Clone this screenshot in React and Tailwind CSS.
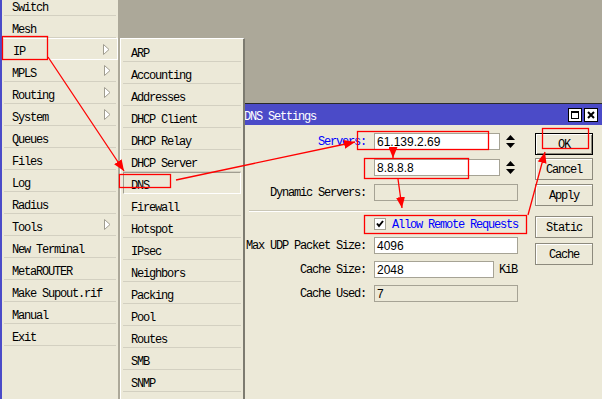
import React from "react";

const mainItems = [
  { label: "Switch" },
  { label: "Mesh" },
  { label: "IP", sub: true, active: true },
  { label: "MPLS", sub: true },
  { label: "Routing", sub: true },
  { label: "System", sub: true },
  { label: "Queues" },
  { label: "Files" },
  { label: "Log" },
  { label: "Radius" },
  { label: "Tools", sub: true },
  { label: "New Terminal" },
  { label: "MetaROUTER" },
  { label: "Make Supout.rif" },
  { label: "Manual" },
  { label: "Exit" },
];

const ipItems = [
  "ARP",
  "Accounting",
  "Addresses",
  "DHCP Client",
  "DHCP Relay",
  "DHCP Server",
  "DNS",
  "Firewall",
  "Hotspot",
  "IPsec",
  "Neighbors",
  "Packing",
  "Pool",
  "Routes",
  "SMB",
  "SNMP",
];

const mono = "font-['Liberation_Mono',monospace] text-[12px] tracking-[-1.2px]";
const sans = "font-['Liberation_Sans',Arial,sans-serif] text-[12px]";

function SubArrow() {
  return (
    <svg width="7" height="11" viewBox="0 0 7 11">
      <polygon points="0.5,0.5 6,5.5 0.5,10.5" fill="#ffffff" stroke="#a09d90" />
    </svg>
  );
}

function Spinner() {
  return (
    <svg width="9" height="13" viewBox="0 0 9 13" className="ml-[6px]">
      <polygon points="4.5,0 9,5 0,5" fill="#000" />
      <polygon points="0,8 9,8 4.5,13" fill="#000" />
    </svg>
  );
}

function Field({ label, blue, children }) {
  return (
    <div className="flex items-center h-[17px]">
      <div className={`w-[128px] text-right pt-[1px] ${mono} ${blue ? "text-[#0000ff]" : "text-black"}`}>
        {label}
      </div>
      <div className="ml-[8px] flex items-center h-full">{children}</div>
    </div>
  );
}

function Input({ value, w, disabled }) {
  return (
    <div
      className={`h-[17px] border border-[#a6a395] flex items-center pl-[2px] ${sans} text-black ${
        disabled ? "bg-[#ece9d8]" : "bg-white"
      }`}
      style={{ width: w }}
    >
      {value}
    </div>
  );
}

function Btn({ label, primary, className = "" }) {
  return (
    <div
      className={`w-[58px] h-[22px] flex items-center justify-center pt-[1px] bg-[#ece9d8] text-black ${mono} ${
        primary
          ? "border border-black shadow-[inset_1px_1px_0_#fff,inset_-1px_-1px_0_#8d8a7d]"
          : "border border-[#8d8a7d] shadow-[inset_1px_1px_0_#fff]"
      } ${className}`}
    >
      {label}
    </div>
  );
}

export default function App() {
  return (
    <div className="relative w-[602px] h-[399px] overflow-hidden flex bg-[#aca899] select-none">
      <div className="w-[2px] h-full bg-[#4b4bc8]" />

      {/* main menu */}
      <div className="w-[116px] h-full bg-[#ece9d8]">
        <div className="-mt-[6px]">
          {mainItems.map((it) => (
            <div
              key={it.label}
              className={`h-[22px] flex items-center justify-between pt-[6px] ${mono} text-black ${
                it.active
                  ? "border border-white pl-[10px] pr-[7px]"
                  : "mx-[2px] pl-[8px] pr-[5px] border-b border-[#d3d0c1]"
              }`}
            >
              <span>{it.label}</span>
              {it.sub && (
                <span className="-mt-[6px]">
                  <SubArrow />
                </span>
              )}
            </div>
          ))}
        </div>
      </div>

      {/* desktop */}
      <div className="relative flex-1 h-full">
        {/* DNS window */}
        <div className="absolute left-[120px] top-[103px] w-[364px] bottom-0 bg-[#ece9d8] flex flex-col">
          <div className="h-[22px] border-t border-[#2a2a2a] bg-[#4b4bc8] flex items-center justify-between pl-[6px] pr-[4px]">
            <span className={`${mono} text-white pt-[4px]`}>DNS Settings</span>
            <div className="flex gap-[2px]">
              <div className="w-[14px] h-[14px] bg-white border border-black flex items-center justify-center">
                <div className="w-[8px] h-[8px] border border-black border-t-2" />
              </div>
              <div className="w-[14px] h-[14px] bg-white border border-black flex items-center justify-center">
                <svg width="8" height="8" viewBox="0 0 8 8">
                  <path d="M1,1 L7,7 M7,1 L1,7" stroke="#000" strokeWidth="2" />
                </svg>
              </div>
            </div>
          </div>

          <div className="flex flex-1">
            <div className="flex flex-col pt-[8px]">
              <Field label="Servers:" blue>
                <Input value="61.139.2.69" w={126} />
                <Spinner />
              </Field>
              <div className="mt-[9px]">
                <Field label="">
                  <Input value="8.8.8.8" w={126} />
                  <Spinner />
                </Field>
              </div>
              <div className="mt-[8px]">
                <Field label="Dynamic Servers:">
                  <Input value="" w={144} disabled />
                </Field>
              </div>
              <div className="mt-[9px] ml-[11px] w-[269px] border-t border-[#cac7b7] border-b border-b-white" />
              <div className="mt-[6px] flex items-center h-[12px] pl-[136px]">
                <div className="w-[12px] h-[12px] bg-white border border-[#a6a395] flex items-center justify-center">
                  <svg width="8" height="8" viewBox="0 0 8 8">
                    <path d="M1,3.5 L3,6 L7,1" stroke="#000" strokeWidth="2" fill="none" />
                  </svg>
                </div>
                <span className={`ml-[6px] pt-[1px] ${mono} text-[#0000ff]`}>Allow Remote Requests</span>
              </div>
              <div className="mt-[7px]">
                <Field label="Max UDP Packet Size:">
                  <Input value="4096" w={144} />
                </Field>
              </div>
              <div className="mt-[7px]">
                <Field label="Cache Size:">
                  <Input value="2048" w={120} />
                  <span className={`ml-[5px] pt-[1px] ${mono} text-black`}>KiB</span>
                </Field>
              </div>
              <div className="mt-[7px]">
                <Field label="Cache Used:">
                  <Input value="7" w={144} disabled />
                </Field>
              </div>
            </div>

            <div className="ml-auto mr-[9px] pt-[8px] flex flex-col">
              <Btn label="OK" primary />
              <Btn label="Cancel" className="mt-[3px]" />
              <Btn label="Apply" className="mt-[4px]" />
              <Btn label="Static" className="mt-[10px]" />
              <Btn label="Cache" className="mt-[5px]" />
            </div>
          </div>
        </div>

        {/* IP submenu */}
        <div className="absolute left-[2px] top-[38px] w-[125px] bottom-0 bg-[#ece9d8] border-t border-l border-white border-r-2 border-r-[#7d7b70] pt-[1px]">
          {ipItems.map((name) => (
            <div
              key={name}
              className={`h-[22px] mx-[2px] flex items-center pt-[6px] ${mono} text-black ${
                name === "DNS"
                  ? "border-t border-l border-[#a09d90] border-r border-r-white border-b border-b-white pl-[7px]"
                  : "border-b border-[#d3d0c1] pl-[8px]"
              }`}
            >
              {name}
            </div>
          ))}
        </div>
      </div>

      {/* red annotations */}
      <svg className="absolute inset-0 pointer-events-none" width="602" height="399" viewBox="0 0 602 399">
        <defs>
          <marker id="ah" markerWidth="11" markerHeight="9" refX="11" refY="4.5" orient="auto" markerUnits="userSpaceOnUse">
            <path d="M0,0 L11,4.5 L0,9 z" fill="#ff0000" />
          </marker>
        </defs>
        <g fill="none" stroke="#ff0000" strokeWidth="1.3">
          <rect x="2.5" y="36.5" width="45" height="23" />
          <rect x="119.5" y="174.5" width="51" height="13" />
          <rect x="357.5" y="131.5" width="131" height="18" />
          <rect x="364.5" y="158.5" width="104" height="20" />
          <rect x="542.5" y="128.5" width="46" height="20" />
          <rect x="364.5" y="215.5" width="162" height="18" />
          <line x1="48" y1="57" x2="124" y2="171" markerEnd="url(#ah)" />
          <line x1="176" y1="180" x2="355" y2="142" markerEnd="url(#ah)" />
          <line x1="393" y1="150" x2="393" y2="158" markerEnd="url(#ah)" />
          <line x1="398" y1="179" x2="402" y2="208" markerEnd="url(#ah)" />
          <line x1="528" y1="215" x2="545" y2="152" markerEnd="url(#ah)" />
        </g>
      </svg>
    </div>
  );
}
